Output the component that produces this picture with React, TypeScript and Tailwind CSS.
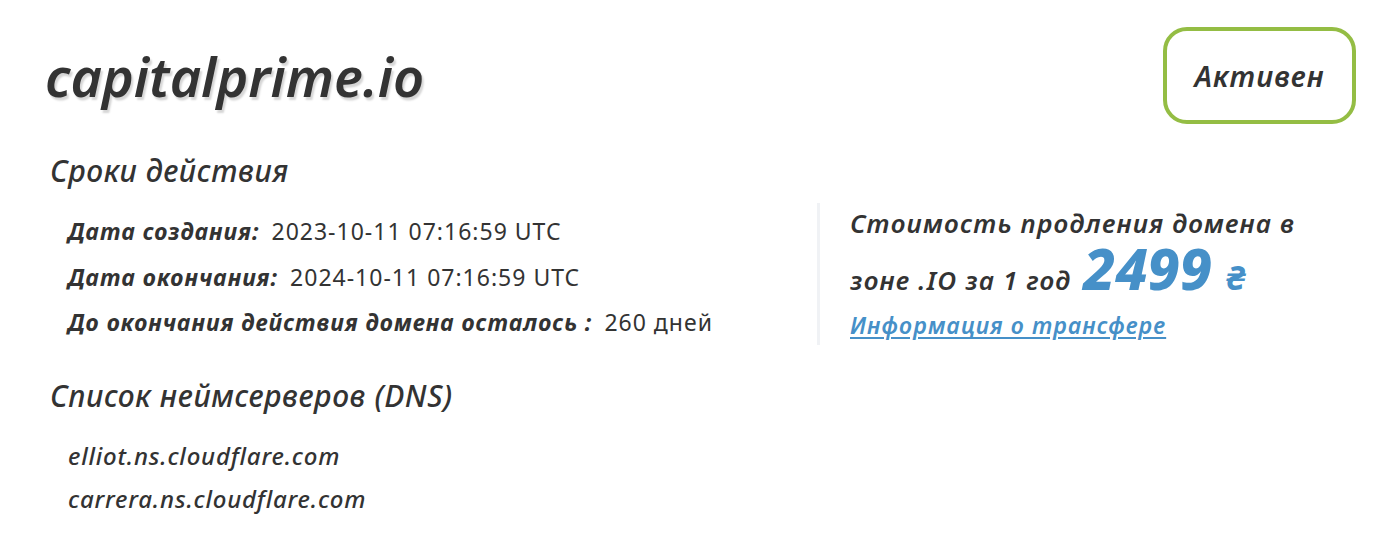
const font = { fontFamily: '"Noto Sans", "Open Sans", sans-serif' };

function InfoRow({ label, value }: { label: string; value: string }) {
  return (
    <div className="flex items-baseline h-[45.5px] leading-[45.5px]">
      <span className="italic font-bold text-[23px] tracking-[1px] text-[#333]">{label}</span>
      <span className="ml-[12px] text-[23px] tracking-[1px] text-[#333]">{value}</span>
    </div>
  );
}

export default function App() {
  return (
    <div className="w-[1386px] h-[534px] bg-white pl-[45px] pr-[30px] text-[#333]" style={font}>
      <div className="flex items-center justify-between pt-[27px]">
        <h1 className="italic font-semibold text-[54px] leading-[60px] [text-shadow:2px_3px_2px_#d6d6d6]">
          capitalprime.io
        </h1>
        <div className="flex items-center justify-center w-[193px] h-[97px] border-[4px] border-[#94bd44] rounded-[24px]">
          <span className="italic font-semibold text-[29px] tracking-[1px]">Активен</span>
        </div>
      </div>

      <h2 className="ml-[5px] mt-[30px] italic font-medium text-[30px] tracking-[0.6px] leading-[34px]">Сроки действия</h2>

      <div className="flex mt-[15px]">
        <div className="w-[772px] pt-[6px] pl-[23px]">
          <InfoRow label="Дата создания:" value="2023-10-11 07:16:59 UTC" />
          <InfoRow label="Дата окончания:" value="2024-10-11 07:16:59 UTC" />
          <InfoRow label="До окончания действия домена осталось :" value="260 дней" />
        </div>
        <div className="border-l-[3px] border-[#f0f2f5] pl-[30px] h-[142px]">
          <p className="italic font-semibold text-[26px] tracking-[1.2px] leading-[40px]">Стоимость продления домена в</p>
          <p className="italic font-semibold text-[26px] tracking-[1.2px] leading-[50px] flex items-baseline">
            зоне .IO за 1 год
            <span className="ml-[12px] text-[57px] tracking-normal font-extrabold text-[#4690c8] leading-[50px]">2499</span>
            <span className="ml-[14px] text-[34px] font-bold text-[#4690c8]">₴</span>
          </p>
          <a href="#" className="block italic font-semibold text-[23px] tracking-[1.1px] leading-[40px] text-[#4690c8] underline underline-offset-[3px]">
            Информация о трансфере
          </a>
        </div>
      </div>

      <h2 className="ml-[5px] mt-[33px] italic font-medium text-[30px] tracking-[0.6px] leading-[34px]">Список неймсерверов (DNS)</h2>

      <div className="ml-[23px] mt-[21px]">
        <div className="italic font-medium text-[24px] tracking-[0.8px] leading-[43px]">elliot.ns.cloudflare.com</div>
        <div className="italic font-medium text-[24px] tracking-[0.8px] leading-[43px]">carrera.ns.cloudflare.com</div>
      </div>
    </div>
  );
}
